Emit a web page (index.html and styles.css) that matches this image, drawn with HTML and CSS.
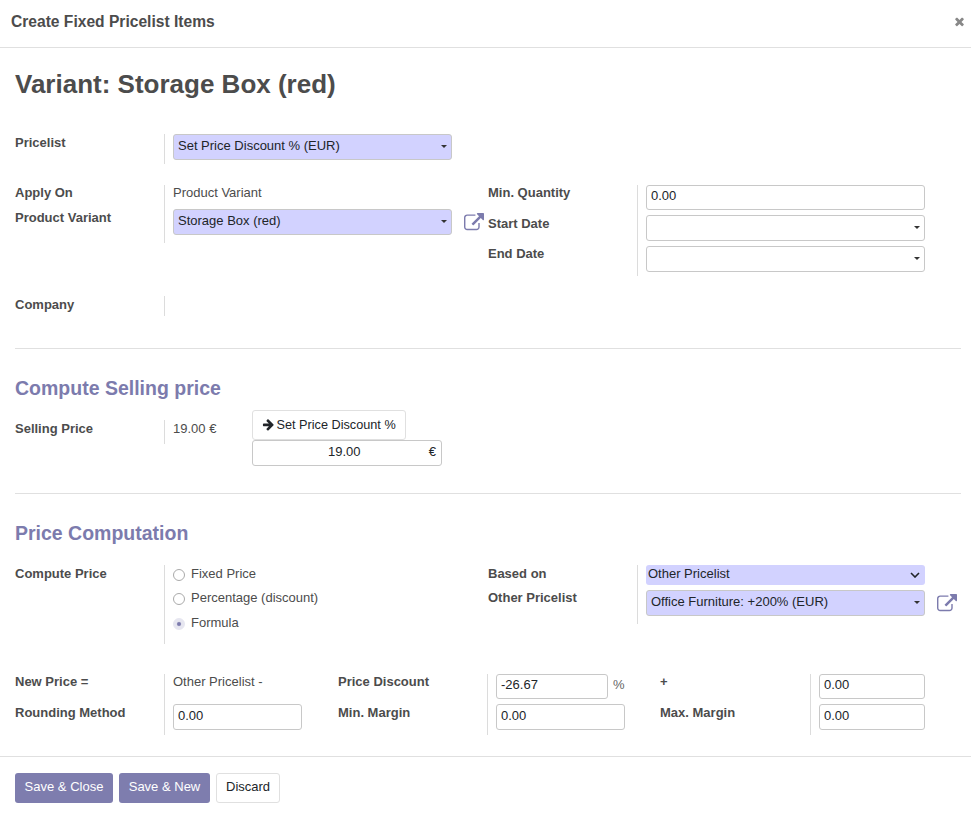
FILE: index.html
```html
<!DOCTYPE html>
<html lang="en">
<head>
    <meta charset="UTF-8">
    <title>Create Fixed Pricelist Items</title>
    <link rel="stylesheet" href="styles.css">
</head>
<body>
    <header class="modal-header">
        <h4 class="modal-title">Create Fixed Pricelist Items</h4>
        <button type="button" class="close">
            <svg class="times" viewBox="0 0 1792 1792"><path d="M1490 1322q0 40-28 68l-136 136q-28 28-68 28t-68-28l-294-294-294 294q-28 28-68 28t-68-28l-136-136q-28-28-28-68t28-68l294-294-294-294q-28-28-28-68t28-68l136-136q28-28 68-28t68 28l294 294 294-294q28-28 68-28t68 28l136 136q28 28 28 68t-28 68l-294 294 294 294q28 28 28 68z"/></svg>
        </button>
    </header>

    <form class="sheet">
        <h1 class="title">Variant: Storage Box (red)</h1>

        <div class="group group-pricelist">
            <label class="lbl lbl-low">Pricelist</label>
            <div class="val"><div class="combo required"><input type="text" value="Set Price Discount % (EUR)"></div></div>
        </div>

        <div class="columns">
            <div class="group group-apply">
                <label class="lbl">Apply On</label>
                <div class="val">Product Variant</div>
                <label class="lbl lbl-low">Product Variant</label>
                <div class="val val-link">
                    <div class="combo required"><input type="text" value="Storage Box (red)"></div>
                    <svg class="ext" viewBox="0 0 1792 1792"><path d="M1408 928v320q0 119-84.5 203.5t-203.5 84.5h-832q-119 0-203.5-84.5t-84.5-203.5v-832q0-119 84.5-203.5t203.5-84.5h704q14 0 23 9t9 23v64q0 14-9 23t-23 9h-704q-66 0-113 47t-47 113v832q0 66 47 113t113 47h832q66 0 113-47t47-113v-320q0-14 9-23t23-9h64q14 0 23 9t9 23zm384-864v512q0 26-19 45t-45 19-45-19l-176-176-652 652q-10 10-23 10t-23-10l-114-114q-10-10-10-23t10-23l652-652-176-176q-19-19-19-45t19-45 45-19h512q26 0 45 19t19 45z"/></svg>
                </div>
            </div>
            <div class="group group-dates">
                <label class="lbl">Min. Quantity</label>
                <div class="val"><input type="text" class="inp" value="0.00"></div>
                <label class="lbl lbl-low">Start Date</label>
                <div class="val"><div class="combo"><input type="text"></div></div>
                <label class="lbl">End Date</label>
                <div class="val"><div class="combo"><input type="text"></div></div>
            </div>
        </div>

        <div class="group group-company">
            <label class="lbl">Company</label>
            <div class="val"></div>
        </div>

        <hr class="sep sep-first">
        <h2 class="section">Compute Selling price</h2>

        <div class="selling">
            <div class="group group-selling">
                <label class="lbl lbl-low">Selling Price</label>
                <div class="val val-low">19.00 €</div>
            </div>
            <div class="selling-stack">
                <button type="button" class="btn btn-plain btn-action">
                    <svg class="arrow" viewBox="0 0 1792 1792"><path d="M1600 960q0 54-37 91l-651 651q-39 37-91 37-51 0-90-37l-75-75q-38-38-38-91t38-91l293-293h-704q-52 0-84.5-37.5t-32.5-90.5v-128q0-53 32.5-90.5t84.5-37.5h704l-293-294q-38-36-38-90t38-90l75-75q38-38 90-38 53 0 91 38l651 651q37 35 37 90z"/></svg>
                    Set Price Discount %
                </button>
                <div class="monetary"><span class="amount">19.00</span><span>€</span></div>
            </div>
        </div>

        <hr class="sep sep-second">
        <h2 class="section">Price Computation</h2>

        <div class="columns columns-compute">
            <div class="group group-compute">
                <label class="lbl lbl-low">Compute Price</label>
                <div class="val radios">
                    <label class="radio"><input type="radio" name="compute">Fixed Price</label>
                    <label class="radio"><input type="radio" name="compute">Percentage (discount)</label>
                    <label class="radio"><input type="radio" name="compute" checked>Formula</label>
                </div>
            </div>
            <div class="group group-based">
                <label class="lbl lbl-low">Based on</label>
                <div class="val">
                    <div class="native required">Other Pricelist
                        <svg class="chevron" viewBox="0 0 10 6"><path d="M1 1l4 4 4-4"/></svg>
                    </div>
                </div>
                <label class="lbl">Other Pricelist</label>
                <div class="val val-link">
                    <div class="combo required"><input type="text" value="Office Furniture: +200% (EUR)"></div>
                    <svg class="ext" viewBox="0 0 1792 1792"><path d="M1408 928v320q0 119-84.5 203.5t-203.5 84.5h-832q-119 0-203.5-84.5t-84.5-203.5v-832q0-119 84.5-203.5t203.5-84.5h704q14 0 23 9t9 23v64q0 14-9 23t-23 9h-704q-66 0-113 47t-47 113v832q0 66 47 113t113 47h832q66 0 113-47t47-113v-320q0-14 9-23t23-9h64q14 0 23 9t9 23zm384-864v512q0 26-19 45t-45 19-45-19l-176-176-652 652q-10 10-23 10t-23-10l-114-114q-10-10-10-23t10-23l652-652-176-176q-19-19-19-45t19-45 45-19h512q26 0 45 19t19 45z"/></svg>
                </div>
            </div>
        </div>

        <div class="group group-formula">
            <label class="lbl">New Price =</label>
            <div class="val">Other Pricelist -</div>
            <label class="lbl">Price Discount</label>
            <div class="val val-percent"><input type="text" class="inp inp-discount" value="-26.67"><span class="percent">%</span></div>
            <label class="lbl">+</label>
            <div class="val"><input type="text" class="inp" value="0.00"></div>

            <label class="lbl lbl-low">Rounding Method</label>
            <div class="val"><input type="text" class="inp" value="0.00"></div>
            <label class="lbl lbl-low">Min. Margin</label>
            <div class="val"><input type="text" class="inp" value="0.00"></div>
            <label class="lbl lbl-low">Max. Margin</label>
            <div class="val"><input type="text" class="inp" value="0.00"></div>
        </div>
    </form>

    <footer class="modal-footer">
        <button type="button" class="btn btn-primary btn-close-save">Save &amp; Close</button>
        <button type="button" class="btn btn-primary btn-new">Save &amp; New</button>
        <button type="button" class="btn btn-plain">Discard</button>
    </footer>
</body>
</html>
```

FILE: styles.css
```css
* { box-sizing: border-box; }
body { margin: 0; background: #fff; color: #4c4c4c; font-family: "Liberation Sans", Arial, sans-serif; font-size: 13px; line-height: 15px; }

.modal-header { display: flex; justify-content: space-between; align-items: center; height: 48px; padding: 0 5px 5px 11px; border-bottom: 1px solid #e0e0e0; }
.modal-title { margin: 0; font-size: 15.6px; font-weight: 700; }
.close { display: flex; padding: 0; border: 0; background: none; }
.times { width: 13px; height: 13px; fill: #888; }

.sheet { padding: 21px 10px 0 15px; }
.title { margin: 0 0 35px; font-size: 26px; line-height: 30px; font-weight: 700; }
.section { margin: 0 0 10px; color: #7c7bad; font-size: 19.5px; line-height: 24px; font-weight: 700; }
.sep { height: 1px; margin: 0; border: 0; background: #e0e0e0; }
.sep-first { margin-top: 32px; margin-bottom: 27px; }
.sep-second { margin-top: 27px; margin-bottom: 27px; }

.group { display: grid; grid-template-columns: 149px 1fr; }
.lbl { font-weight: 700; }
.lbl-low, .val-low { padding-top: 1px; }
.val { border-left: 1px solid #dcdcdc; padding-left: 8px; }
.val-link { display: flex; align-items: flex-start; gap: 12px; }

.columns { display: grid; grid-template-columns: 473px 473px; }
.group-pricelist { grid-template-rows: 30px; margin-bottom: 21px; }
.group-apply { grid-template-rows: 24px 34px; }
.group-dates { grid-template-rows: 30px 31px 30px; }
.group-company { grid-template-rows: 20px; margin-top: 20px; }
.group-company .lbl { padding-top: 1px; }
.group-selling { grid-template-columns: 149px 88px; grid-template-rows: 24px; margin-top: 10px; }
.group-compute { grid-template-rows: 79px; }
.group-based { grid-template-rows: 25px 34px; }
.columns-compute { margin-top: 20px; }

.inp, .combo input { display: block; width: 279px; height: 26px; padding: 0 4px 4px; border: 1px solid #c8c8c8; border-radius: 3px; background: #fff; color: #212529; font: inherit; }
.group-dates .inp { height: 25px; }
.combo { position: relative; width: 279px; }
.combo::after { content: ""; position: absolute; top: 11px; right: 5px; border-top: 3.5px solid #333; border-left: 3.5px solid transparent; border-right: 3.5px solid transparent; }
.required input, .native.required { background: #d2d2ff; }

.native { position: relative; width: 279px; height: 20px; padding: 1px 2px 0; border-radius: 3px; color: #212529; }
.chevron { position: absolute; top: 7px; right: 5px; width: 10px; height: 6px; fill: none; stroke: #212529; stroke-width: 1.6; }

.ext { flex: none; width: 20px; height: 20px; margin-top: 4px; fill: #7c7bad; }

.selling { display: flex; align-items: flex-start; }
.selling-stack { display: flex; flex-direction: column; align-items: flex-start; }
.monetary { display: flex; justify-content: space-between; width: 190px; height: 26px; padding: 3px 5px 0 75px; border: 1px solid #c8c8c8; border-radius: 3px; color: #212529; }
.amount { display: block; }

.radios { display: flex; flex-direction: column; gap: 9px; padding-top: 1px; }
.radio { display: flex; align-items: flex-start; gap: 6px; }
.radio:last-child { margin-top: 1px; }
.radio input { appearance: none; width: 12px; height: 12px; margin: 3px 0 0; border: 1px solid #aaa; border-radius: 50%; background: #fff; }
.radio input:checked { border-color: #e6e6f0; background: radial-gradient(circle, #7c7bad 1.4px, #e6e6f0 2.6px); }

.group-formula { grid-template-columns: 149px 174px 149px 173px 150px 1fr; grid-template-rows: 30px 31px; margin-top: 30px; }
.group-formula .inp { width: 129px; }
.group-formula .val:nth-child(6) .inp, .group-formula .val:nth-child(12) .inp { width: 106px; }
.group-formula .inp-discount { width: 112px; height: 25px; }
.group-formula .val:nth-child(6) .inp { height: 25px; }
.val-percent { display: flex; gap: 5px; }
.percent { padding-top: 3px; color: #666; }

.modal-footer { display: flex; gap: 6px; margin-top: 21px; padding: 16px 15px; border-top: 1px solid #e0e0e0; }
.btn { height: 30px; padding: 0 9px 4px; border: 1px solid transparent; border-radius: 3px; font: inherit; white-space: nowrap; cursor: pointer; }
.btn-primary { background: #7c7bad; color: #fff; opacity: 0.98; }
.btn-plain { background: #fff; border-color: #e0e0e0; color: #212529; }
.btn-action { width: 154px; padding-bottom: 0; font-size: 12.7px; text-align: left; }
.btn-close-save { width: 98px; padding-left: 0; padding-right: 0; }
.btn-new { width: 91px; padding-left: 0; padding-right: 0; }
.arrow { width: 13px; height: 13px; margin-right: -2px; vertical-align: -2px; fill: #212529; }
```
